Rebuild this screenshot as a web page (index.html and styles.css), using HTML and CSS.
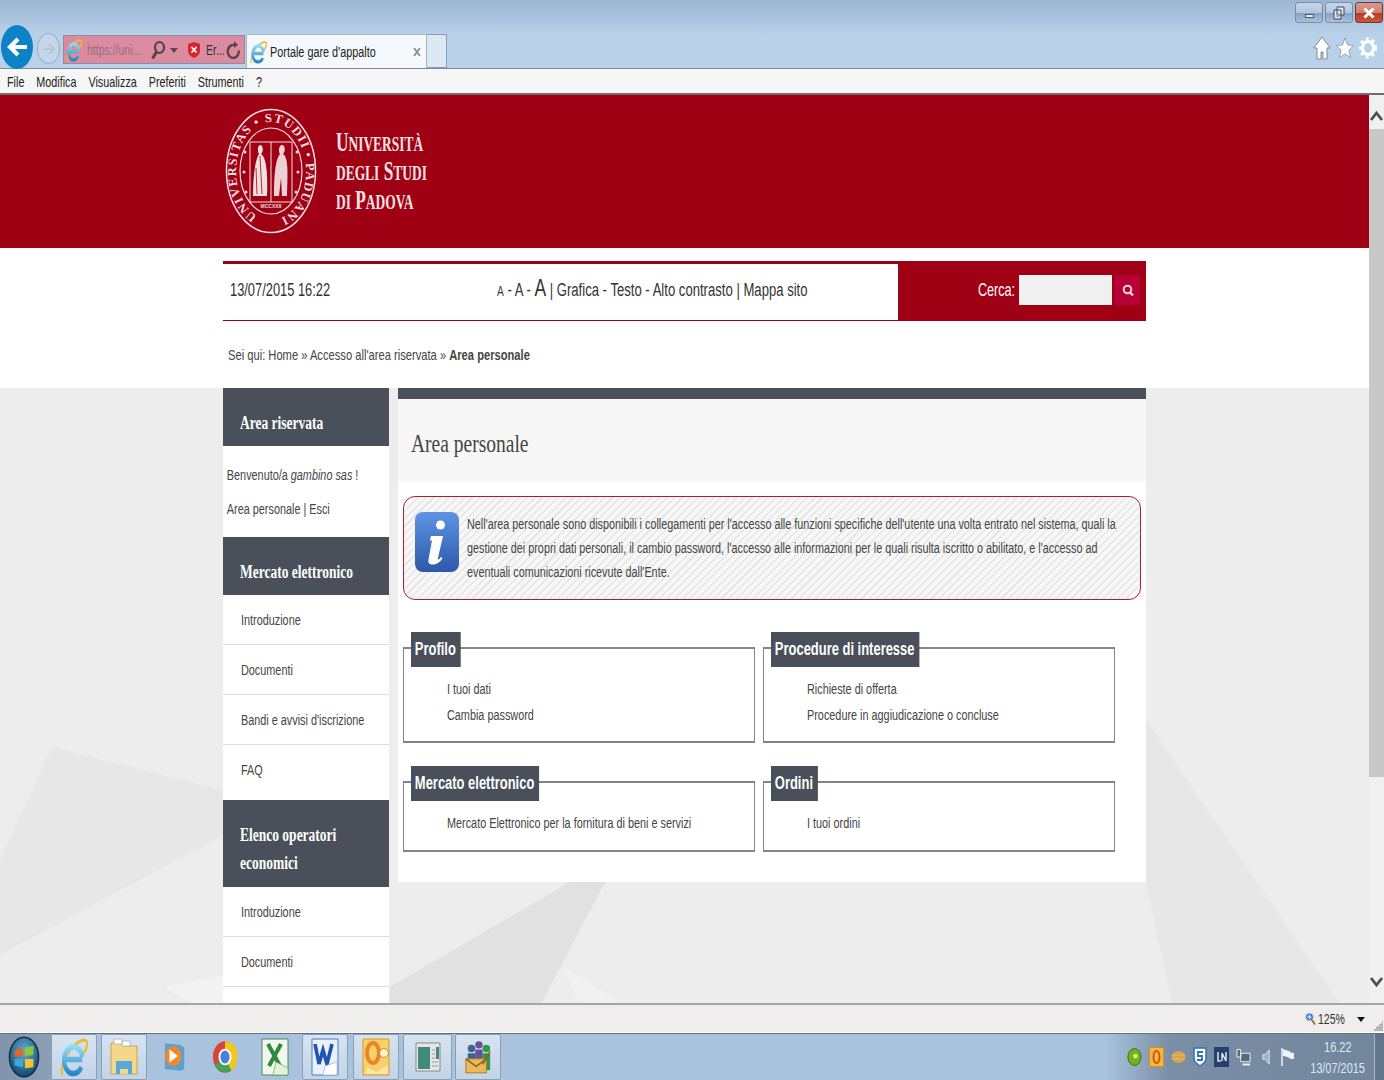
FILE: index.html
```html
<!DOCTYPE html>
<html lang="it">
<head>
<meta charset="utf-8">
<title>Portale gare d'appalto</title>
<link rel="stylesheet" href="styles.css">
</head>
<body>
<svg class="defs" width="0" height="0" aria-hidden="true">
  <defs>
    <linearGradient id="ieb" x1="0" y1="0" x2="0" y2="1"><stop offset="0" stop-color="#8fdcf5"/><stop offset="1" stop-color="#2a86c8"/></linearGradient>
    <symbol id="ie" viewBox="0 0 24 24" preserveAspectRatio="none">
      <path d="M2 23C0 19 5 9 14 4c4-2 8-3 9-1 1 2-1 5-3 7" fill="none" stroke="#f2b92c" stroke-width="1.800"/>
      <path d="M5 13.500h14M18.300 18a8 8 0 1 1 .9-6" fill="none" stroke="url(#ieb)" stroke-width="3.400"/>
    </symbol>
  </defs>
</svg>
<div class="app">
  <header class="chrome">
    <div class="winbtns">
      <span class="wb"><i class="min"></i></span>
      <span class="wb"><svg width="14" height="14" viewBox="0 0 14 14"><path d="M5 1h7v8H5zM2 4h7v9H2z" fill="#dfe6ee" stroke="#3f4a58"/><path d="M4.500 7h2.500v4H4.500z" fill="#8fa2b6"/></svg></span>
      <span class="wb close"><svg width="14" height="12" viewBox="0 0 14 12"><path d="M2.500 1.500l9 9M11.500 1.500l-9 9" stroke="#fff" stroke-width="3"/></svg></span>
    </div>
    <div class="navrow">
      <span class="back"><svg width="24" height="24" viewBox="0 0 24 24"><path d="M22 12H6M13 4l-8 8 8 8" fill="none" stroke="#fff" stroke-width="4.200"/></svg></span>
      <span class="fwd"><svg width="16" height="18" viewBox="0 0 16 18"><path d="M2 9h11M8 4l5 5-5 5" fill="none" stroke="#b8c6d6" stroke-width="2"/></svg></span>
      <div class="addr">
        <svg class="addr-ie" width="16" height="24"><use href="#ie"/></svg>
        <span class="url">https://uni...</span>
        <svg class="addr-search" width="16" height="20" viewBox="0 0 16 20"><ellipse cx="9.500" cy="7.500" rx="4.500" ry="5.500" fill="none" stroke="#54414a" stroke-width="2.200"/><path d="M6.500 12L2.500 18.500" stroke="#54414a" stroke-width="3"/></svg>
        <i class="caret"></i>
        <svg class="addr-shield" width="14" height="18" viewBox="0 0 14 18"><path d="M7 1l6 2v7c0 3-3 6-6 7-3-1-6-4-6-7V3z" fill="#d8262c"/><path d="M4.500 6l5 5.500M9.500 6l-5 5.500" stroke="#fff" stroke-width="1.800"/></svg>
        <span class="err">Er...</span>
        <svg class="addr-reload" width="14" height="18" viewBox="0 0 14 18"><path d="M9.500 4.500a5.500 6.500 0 1 0 3.200 5" fill="none" stroke="#55474e" stroke-width="2.400"/><path d="M8 0v7l4-3z" fill="#55474e"/></svg>
      </div>
      <div class="tab">
        <svg class="tab-ie" width="17" height="24"><use href="#ie"/></svg>
        <span class="tabtitle">Portale gare d'appalto</span>
        <svg class="tabx" width="8" height="10" viewBox="0 0 8 10"><path d="M1 1l6 8M7 1l-6 8" stroke="#8d8d8d" stroke-width="1.800"/></svg>
      </div>
      <div class="newtab"></div>
      <div class="tools">
        <svg width="18" height="24" viewBox="0 0 18 24"><path d="M9 1L.8 12H4v11h4v-7h2v7h4V12h3.200z" fill="#fff" stroke="#7d8b9b"/></svg>
        <svg width="18" height="22" viewBox="0 0 18 22"><path d="M9 1l2.500 7 6 .5-4.600 4.800 1.500 7.200L9 16.800 3.600 20.500l1.500-7.200L.5 8.500l6-.5z" fill="#fff" stroke="#7d8b9b" stroke-width=".7"/></svg>
        <svg width="18" height="24" viewBox="0 0 18 24"><ellipse cx="9" cy="12" rx="5.500" ry="6.500" fill="none" stroke="#fff" stroke-width="3.200"/><ellipse cx="9" cy="12" rx="7.800" ry="9.500" fill="none" stroke="#fff" stroke-width="2.400" stroke-dasharray="3 3.400"/></svg>
      </div>
    </div>
    <nav class="menubar">
      <div class="menuin"><span>File</span><span>Modifica</span><span>Visualizza</span><span>Preferiti</span><span>Strumenti</span><span>?</span></div>
    </nav>
  </header>

  <div class="viewport">
    <div class="page">
      <div class="banner">
        <div class="wrap bannerin">
          <svg class="seal" width="92" height="126" viewBox="0 0 92 126">
            <defs><path id="ring" d="M32 107.900A35 49 0 1 1 48 112"/></defs>
            <ellipse cx="46" cy="63" rx="44.500" ry="61.500" fill="none" stroke="#f1dfe0" stroke-width="1.500"/>
            <ellipse cx="46" cy="63" rx="31" ry="43" fill="none" stroke="#f1dfe0" stroke-width="1.200"/>
            <text class="sealtext" fill="#f1dfe0"><textPath href="#ring" textLength="240" lengthAdjust="spacing">UNIVERSITAS • STUDII • PADUANI</textPath></text>
            <path d="M25 34h42v60H25z" fill="none" stroke="#f1dfe0"/>
            <path d="M46 34v60" stroke="#f1dfe0"/>
            <circle cx="20" cy="44" r="1.500" fill="#f1dfe0"/><circle cx="72" cy="44" r="1.500" fill="#f1dfe0"/>
            <circle cx="19" cy="64" r="1.500" fill="#f1dfe0"/><circle cx="73" cy="64" r="1.500" fill="#f1dfe0"/>
            <circle cx="21" cy="84" r="1.500" fill="#f1dfe0"/><circle cx="71" cy="84" r="1.500" fill="#f1dfe0"/>
            <path d="M35 37c3 0 4 6 1 9 5 3 7 17 6 42H28c0-18 2-36 6-42-2-3-1-9 1-9z" fill="#f1dfe0"/>
            <path d="M35 48l2 38M31 60l1 26" stroke="#a00013" stroke-width=".8"/>
            <path d="M57 37c3 0 4 6 1 9 5 3 5 16 4 42h-5l-1-18-2 18h-5c0-18 1-36 6-42-2-3-1-9 2-9z" fill="#ecd0d3"/>
            <text class="sealyear" x="46" y="100" text-anchor="middle" fill="#f1dfe0">MCCXXII</text>
          </svg>
          <div class="logotext">
            <div>U<small>NIVERSITÀ</small></div>
            <div><small>DEGLI</small> S<small>TUDI</small></div>
            <div><small>DI</small> P<small>ADOVA</small></div>
          </div>
        </div>
      </div>

      <div class="wrap">
        <div class="infobar">
          <div class="infoleft">
            <span class="date">13/07/2015 16:22</span>
            <span class="access"><span class="a1">A</span> - <span class="a2">A</span> - <span class="a3">A</span> | Grafica - Testo - Alto contrasto | Mappa sito</span>
          </div>
          <div class="search">
            <span class="cerca">Cerca:</span>
            <span class="sinput"></span>
            <span class="sbtn"><svg width="12" height="13" viewBox="0 0 12 13"><circle cx="5.500" cy="5.500" r="3.800" fill="none" stroke="#f3d4dc" stroke-width="2"/><path d="M8 8.500l3 3" stroke="#f3d4dc" stroke-width="2.400"/></svg></span>
          </div>
        </div>
        <div class="crumbs">Sei qui: Home » Accesso all'area riservata » <b>Area personale</b></div>
      </div>

      <div class="body">
        <svg class="bgshapes" width="1369" height="620" viewBox="0 0 1369 620">
          <path d="M52 359L223 402V447L0 567V472z" fill="#e7e7e7"/>
          <path d="M163 599L223 587V616H193z" fill="#f2f2f2"/>
          <path d="M1146 332L1340 616H1172L1146 494z" fill="#e7e7e7"/>
          <path d="M570 494H605L541 616H390V599z" fill="#e1e1e1"/>
          <path d="M563 577L622 616H579z" fill="#f1f1f1"/>
        </svg>
        <div class="wrap cols">
          <aside class="side">
            <h3 class="shead"><span class="serif">Area riservata</span></h3>
            <p class="hello first">Benvenuto/a <em>gambino sas</em> !</p>
            <p class="hello second">Area personale | Esci</p>
            <h3 class="shead"><span class="serif">Mercato elettronico</span></h3>
            <div class="sitem"><a>Introduzione</a></div>
            <div class="sitem"><a>Documenti</a></div>
            <div class="sitem"><a>Bandi e avvisi d'iscrizione</a></div>
            <div class="sitem last"><a>FAQ</a></div>
            <h3 class="shead tall"><span class="serif">Elenco operatori<br>economici</span></h3>
            <div class="sitem"><a>Introduzione</a></div>
            <div class="sitem"><a>Documenti</a></div>
            <div class="sitem"></div>
          </aside>
          <main class="main">
            <div class="title"><h1 class="serif">Area personale</h1></div>
            <div class="notice">
              <svg class="infoicon" width="44" height="60" viewBox="0 0 44 60">
                <defs><linearGradient id="ib" x1="0" y1="0" x2="0" y2="1"><stop offset="0" stop-color="#5f94e4"/><stop offset="1" stop-color="#2c58a8"/></linearGradient></defs>
                <rect width="44" height="60" rx="8" fill="url(#ib)"/>
                <circle cx="25.500" cy="13" r="4.500" fill="#fff"/>
                <path d="M16 24h12l-5 22c-.5 2 1 2 3-1l1.500 1C25 51 20 53 16.500 52.500c-3-.5-3.500-3-3-5l3.500-19h-2z" fill="#fff"/>
              </svg>
              <p>Nell'area personale sono disponibili i collegamenti per l'accesso alle funzioni specifiche dell'utente una volta entrato nel sistema, quali la<br>gestione dei propri dati personali, il cambio password, l'accesso alle informazioni per le quali risulta iscritto o abilitato, e l'accesso ad<br>eventuali comunicazioni ricevute dall'Ente.</p>
            </div>
            <div class="boxes">
              <section class="box tall"><h4>Profilo</h4><a>I tuoi dati</a><a>Cambia password</a></section>
              <section class="box tall"><h4>Procedure di interesse</h4><a>Richieste di offerta</a><a>Procedure in aggiudicazione o concluse</a></section>
              <section class="box short"><h4>Mercato elettronico</h4><a>Mercato Elettronico per la fornitura di beni e servizi</a></section>
              <section class="box short"><h4>Ordini</h4><a>I tuoi ordini</a></section>
            </div>
          </main>
        </div>
      </div>
    </div>
    <div class="scrollbar">
      <svg class="up" width="15" height="16" viewBox="0 0 15 16"><path d="M2 12l5.500-7 5.500 7" fill="none" stroke="#4f4f4f" stroke-width="2.800"/></svg>
      <div class="thumb"></div>
      <svg class="down" width="15" height="16" viewBox="0 0 15 16"><path d="M2 4l5.500 7 5.500-7" fill="none" stroke="#4f4f4f" stroke-width="2.800"/></svg>
    </div>
  </div>

  <div class="status">
    <svg class="zoomicon" width="11" height="14" viewBox="0 0 11 14"><circle cx="4.500" cy="5" r="4" fill="#3f7fd0" stroke="#c9d6e6"/><path d="M2.500 5h4M4.500 3v4" stroke="#fff"/><path d="M7 8l3 4.500" stroke="#a0703c" stroke-width="2"/></svg>
    <span class="zoom">125%</span>
    <i class="dcaret"></i>
    <span class="grip"></span>
  </div>

  <footer class="taskbar">
    <span class="start"><svg width="32" height="44" viewBox="0 0 34 44"><defs><radialGradient id="orb" cx=".5" cy=".35" r=".7"><stop offset="0" stop-color="#5fb0d8"/><stop offset="1" stop-color="#0e3f66"/></radialGradient></defs><ellipse cx="17" cy="22" rx="15.500" ry="21" fill="url(#orb)" stroke="#0f2f4a" stroke-width="1.500"/><path d="M7 15l9-3v9l-9 1z" fill="#e8622c"/><path d="M18 12l9-2 0 10-9 1z" fill="#8cc63f"/><path d="M7 24h9v9l-9-2z" fill="#3ea6e0"/><path d="M18 24h9l0 9-9 1z" fill="#f4c430"/></svg></span>
    <span class="tb on"><svg width="28" height="40"><use href="#ie"/></svg></span>
    <span class="tb on"><svg width="28" height="38" viewBox="0 0 28 38"><path d="M1 5h10l2 3h14v28H1z" fill="#f3d88a" stroke="#c9a34f"/><path d="M4 1h8v5H4zM12 3h8v5h-8z" fill="#fff" stroke="#bbb"/><path d="M6 23h16v13H6z" fill="#5aa8d8"/><path d="M10 31h8v5h-8z" fill="#f3d88a"/></svg></span>
    <span class="tb"><svg width="24" height="36" viewBox="0 0 26 36"><path d="M2 3l17 2 4 3v23l-4 2-17-2z" fill="#5b9fd4"/><ellipse cx="11" cy="17" rx="9" ry="11" fill="#ef8a2c"/><path d="M7 10l9 7-9 7z" fill="#fff"/></svg></span>
    <span class="tb"><svg width="26" height="36" viewBox="0 0 28 36"><ellipse cx="14" cy="18" rx="13" ry="17" fill="#d9453a"/><path d="M14 18L3 27C8 36 19 37 24 28z" fill="#3aa757"/><path d="M14 1c6 0 11 4 13 10v10c-1 6-3 9-6 12l-7-15z" fill="#f5c518"/><ellipse cx="14" cy="18" rx="7" ry="9" fill="#fff"/><ellipse cx="14" cy="18" rx="5" ry="7" fill="#4a80d8"/></svg></span>
    <span class="tb"><svg width="28" height="38" viewBox="0 0 28 38"><path d="M1 1h26v36H1z" fill="#f1f7ee" stroke="#4b8b54"/><path d="M7 6l12 22M20 6L8 28" fill="none" stroke="#2f8a3c" stroke-width="4"/><path d="M15 24l12 6v7H12z" fill="#e4f1dc" stroke="#6aa86f" stroke-width=".7"/></svg></span>
    <span class="tb on"><svg width="28" height="38" viewBox="0 0 28 38"><path d="M1 1h26v36H1z" fill="#eaf1fb" stroke="#4a7cc4"/><path d="M4 6l4 20 4-14 4 14 5-20" fill="none" stroke="#1f55ad" stroke-width="3.600"/><path d="M14 28l12-4v13H12z" fill="#fff" stroke="#9bb4d8" stroke-width=".7"/></svg></span>
    <span class="tb on"><svg width="28" height="38" viewBox="0 0 28 38"><path d="M1 1h26v36H1z" fill="#f8d06a" stroke="#d99a2c"/><ellipse cx="11" cy="15" rx="6" ry="10" fill="none" stroke="#e8852c" stroke-width="4"/><circle cx="22" cy="15" r="4.500" fill="#fff3cf" stroke="#c98a2c"/><path d="M5 29l9 5 12-7v9H3z" fill="#fbe6a8"/></svg></span>
    <span class="tb on wide"><svg width="26" height="30" viewBox="0 0 26 30"><path d="M1 1h24v28H1z" fill="#e6e6e6" stroke="#888"/><path d="M3 5h12v22H3z" fill="#3f8a7a"/><path d="M21 5h3v12h-3z" fill="#3f8a7a"/><path d="M17 8h3M17 12h3M17 16h3M17 20h6M17 24h6" stroke="#999"/></svg></span>
    <span class="tb on"><svg width="28" height="36" viewBox="0 0 30 36"><circle cx="8" cy="9" r="4" fill="#40608f"/><circle cx="16" cy="5" r="4" fill="#6a4f9f"/><circle cx="24" cy="9" r="4" fill="#2c9a4a"/><path d="M4 14h8v14H4z" fill="#40608f"/><path d="M12 10h8v14h-8z" fill="#6a4f9f"/><path d="M20 14h8v18h-8z" fill="#2c9a4a"/><path d="M2 20h22v15H2z" fill="#eab95a" stroke="#a97a24"/><path d="M2 20l11 8 11-8M20 26l8-14" fill="none" stroke="#8a5f14" stroke-width="1.500"/></svg></span>
    <div class="tray">
      <svg width="15" height="20" viewBox="0 0 16 20"><ellipse cx="8" cy="10" rx="7" ry="9" fill="#6fb61e" stroke="#3a6a12"/><circle cx="9" cy="9" r="2.500" fill="#d6f08a"/></svg>
      <svg width="15" height="20" viewBox="0 0 15 20"><rect x=".5" y=".5" width="14" height="19" fill="#f4b83a" stroke="#d98f1a"/><ellipse cx="7.500" cy="10" rx="3" ry="6" fill="none" stroke="#c9561c" stroke-width="2"/></svg>
      <svg width="15" height="14" viewBox="0 0 15 14"><ellipse cx="7.500" cy="7" rx="7" ry="6" fill="#d9a05a"/><path d="M1 5h13M1 9h13" stroke="#e9c24a"/></svg>
      <svg width="14" height="20" viewBox="0 0 14 20"><path d="M1 1h12v11c0 3-3 5-6 7-3-2-6-4-6-7z" fill="#fff" stroke="#2f6fb5" stroke-width="1.500"/><path d="M10 5H5v4h4v4H4" fill="none" stroke="#2f6fb5" stroke-width="1.800"/></svg>
      <svg width="15" height="20" viewBox="0 0 15 20"><rect width="15" height="20" fill="#24406e"/><path d="M4 5v9h3M8 14V6l4 8V5" fill="none" stroke="#dfe6f0" stroke-width="1.500"/></svg>
      <svg width="15" height="20" viewBox="0 0 16 20"><path d="M1 2h4v8H1zM5 6h10v9H5z" fill="#5b6b78" stroke="#eef3f8"/><path d="M7 18h8" stroke="#eef3f8" stroke-width="2"/></svg>
      <svg class="speaker" width="8" height="20" viewBox="0 0 10 20"><path d="M1 7h3l5-6v18l-5-6H1z" fill="#9fb0c0" stroke="#eef3f8"/></svg>
      <svg class="flag" width="15" height="20" viewBox="0 0 15 20"><path d="M2 1v18" stroke="#eef3f8" stroke-width="1.500"/><path d="M3 2c4 2 5 1 6 2s3 2 5 2v6c-2 0-4 0-5-1S6 9 3 9z" fill="#eef3f8"/></svg>
      <div class="clock"><span>16.22</span><span>13/07/2015</span></div>
      <span class="showdesk"></span>
    </div>
  </footer>
</div>
</body>
</html>
```

FILE: styles.css
```css
* { box-sizing: border-box; }
html, body { margin: 0; padding: 0; height: 100%; overflow: hidden; }
body { font-family: "Liberation Sans", Arial, sans-serif; color: #333; font-size: 15.5px; }
.defs { position: absolute; }
.app { width: 1384px; height: 1080px; display: flex; flex-direction: column; overflow: hidden; }

/* The screenshot is squeezed horizontally: all text is scaled on the x axis */
.url, .err, .tabtitle, .menuin, .date, .access, .cerca, .crumbs, .hello, .sitem a,
.notice p, .box a, .box h4, .zoom, .clock span {
  transform: scaleX(.7); transform-origin: left center; white-space: nowrap;
}

/* Browser chrome */
.chrome { height: 95px; flex: none; background: linear-gradient(#9bb6d3 0, #b9d0e9 34px, #bad1ea 68px); display: flex; flex-direction: column; position: relative; }
.winbtns { position: absolute; top: 2px; right: 1px; display: flex; gap: 2px; }
.wb { width: 28px; height: 21px; border: 1px solid #7c8ea3; border-radius: 3px; background: linear-gradient(#c4d6ea 0, #b1c7df 50%, #83a0bf 51%, #a9c2dc); display: flex; align-items: center; justify-content: center; }
.wb.close { background: linear-gradient(#d99a8c 0, #cf7f6e 50%, #b83a22 51%, #c9553e); border-color: #6e3b3b; }
.min { display: block; width: 9px; height: 4px; background: #e8edf3; border: 1px solid #4a5868; margin-top: 6px; }
.navrow { height: 68px; display: flex; align-items: flex-end; position: relative; }
.back { width: 32px; height: 44px; margin: 0 0 -1px 1px; border-radius: 50%; background: #0c83c7; display: flex; align-items: center; justify-content: center; flex: none; }
.fwd { width: 23px; height: 31px; margin: 0 0 4px 4px; border-radius: 50%; border: 1px solid #9db1c7; background: #c3d6ea; display: flex; align-items: center; justify-content: center; flex: none; }
.addr { width: 182px; height: 29px; margin: 0 0 4px 3px; background: #dc8aa0; border: 1px solid #8e8da0; display: flex; align-items: center; font-size: 15px; flex: none; }
.addr svg, .addr .url, .addr .err { flex: none; }
.addr-ie { margin-left: 2px; }
.url { width: 60px; margin-left: 5px; color: #936f80; }
.addr-search { margin-left: 3px; }
.caret { width: 0; height: 0; flex: none; border: 4px solid transparent; border-top: 5px solid #5b4750; margin: 5px 0 0 4px; }
.addr-shield { margin-left: 9px; }
.err { width: 18px; margin-left: 5px; color: #333; }
.addr-reload { margin-left: 2px; }
.tab { width: 181px; height: 34px; margin-left: 1px; background: #f5f9fd; border: 1px solid #a6b4c4; border-bottom: 0; border-radius: 2px 0 0 0; display: flex; align-items: center; padding-left: 3px; font-size: 15.5px; color: #222; flex: none; }
.tab-ie { flex: none; }
.tabtitle { width: 143px; margin-left: 3px; flex: none; }
.tabx { flex: none; }
.newtab { width: 20px; height: 34px; background: #dce8f6; border: 1px solid #8a9bb0; border-left: 0; flex: none; }
.tools { margin: 0 7px 6px auto; display: flex; align-items: center; gap: 5px; height: 28px; }
.menubar { height: 27px; background: #f6f6f6; border-top: 1px solid #7f8b9a; border-bottom: 2px solid #6f6f6f; display: flex; align-items: center; padding-left: 7px; font-size: 15px; color: #222; }
.menuin { display: flex; gap: 16.5px; transform: scaleX(.72); }

/* Scrolling page */
.viewport { height: 910px; flex: none; display: flex; overflow: hidden; border-bottom: 2px solid #a5a5a5; }
.page { width: 1369px; flex: none; background: #fff; overflow: hidden; display: flex; flex-direction: column; }
.scrollbar { width: 15px; flex: none; background: #f0f0f0; display: flex; flex-direction: column; align-items: center; }
.scrollbar svg { flex: none; }
.up { margin: 13px 0 5px; }
.thumb { width: 15px; height: 648px; background: #c8c8c8; flex: none; }
.scrollbar .down { margin-top: auto; margin-bottom: 13px; }
.wrap { width: 923px; margin-left: 223px; }
.banner { height: 153px; flex: none; background: #a00013; }
.bannerin { display: flex; align-items: center; height: 153px; padding-left: 2px; }
.seal { flex: none; margin-top: -2px; }
.sealtext { font: 700 12.5px "Liberation Serif", serif; }
.sealyear { font: 700 5px "Liberation Sans", sans-serif; }
.logotext { margin-left: 19px; font-family: "Liberation Serif", serif; font-weight: 700; color: #f2e3e4; font-size: 27px; line-height: 29px; }
.logotext small { font-size: 21px; line-height: 0; }
.logotext div { transform: scaleX(.64); transform-origin: left; white-space: nowrap; }

.infobar { margin-top: 13px; height: 60px; border-top: 3px solid #a00013; border-bottom: 1px solid #a00013; display: flex; width: 923px; }
.infoleft { width: 675px; flex: none; display: flex; align-items: center; padding: 0 0 4px 7px; font-size: 18px; color: #333; }
.date { width: 267px; flex: none; transform: scaleX(.714); }
.access { flex: none; margin-top: -4px; transform: scaleX(.728); }
.a1 { font-size: 14px; }
.a2 { font-size: 18px; }
.a3 { font-size: 24px; }
.search { width: 248px; flex: none; background: #a00013; margin-top: -3px; margin-bottom: -1px; display: flex; align-items: center; color: #fff; font-size: 18px; padding: 0 0 2px 80px; }
.cerca { width: 41px; flex: none; }
.sinput { width: 93px; height: 30px; background: #f0f0f0; flex: none; }
.sbtn { width: 25px; height: 30px; background: #b60037; margin-left: 3px; display: flex; align-items: center; justify-content: center; flex: none; }
.crumbs { height: 67px; padding: 25px 0 0 6.500px; font-size: 14.5px; line-height: 18px; color: #444; transform: scaleX(.77); }

.body { flex: 1; background: #ededed; position: relative; overflow: hidden; }
.bgshapes { position: absolute; left: 0; top: 0; }
.cols { display: flex; gap: 9px; position: relative; }
.side { width: 166px; flex: none; background: #fff; }
.serif { font-family: "Liberation Serif", serif; display: inline-block; transform: scaleX(.75); transform-origin: left; white-space: nowrap; }
.shead { margin: 0; background: #49505a; color: #fff; height: 58px; padding: 11px 0 0 17px; display: flex; align-items: center; font-size: 18px; font-weight: 700; line-height: 28px; }
.shead.tall { height: 87px; }
.hello { margin: 0; padding-left: 5.500px; color: #444; line-height: 18px; }
.hello.first { height: 46px; padding-top: 20px; }
.hello.second { height: 45px; padding-top: 8px; }
.sitem { height: 50px; border-bottom: 1px solid #ddd; padding: 16px 0 0 17.500px; line-height: 18px; color: #444; }
.sitem.last { height: 55px; border-bottom: 0; }
.sitem a { display: block; }

.main { width: 748px; height: 494px; background: #fff; border-top: 11px solid #49505a; flex: none; }
.title { height: 83px; background: #f7f7f7; padding: 26px 0 0 13px; }
.title h1 { margin: 0; font-size: 26px; font-weight: 400; line-height: 38px; color: #444; }
.notice { margin: 14px 5px 0 5px; height: 104px; border: 1px solid #b01c35; border-radius: 12px; background: repeating-linear-gradient(135deg, #f7f7f7 0 4px, #e6e6e6 4px 5.500px); display: flex; align-items: flex-start; padding: 15px 0 0 11px; }
.infoicon { flex: none; }
.notice p { margin: 0 0 0 8px; line-height: 24px; color: #444; transform: scaleX(.697); }
.boxes { display: grid; grid-template-columns: 352px 352px; column-gap: 8px; row-gap: 38px; padding: 47px 0 0 5px; }
.box { border: 1px solid #80858c; border-width: 2px 1px; position: relative; padding: 27px 0 0 43px; }
.box.tall { height: 96px; }
.box.short { height: 71px; }
.box h4 { position: absolute; left: 7px; top: -17px; margin: 0; height: 35px; background: #49505a; color: #fff; font-size: 18.5px; line-height: 33px; padding: 0 7px 0 5.500px; font-weight: 700; }
.box a { display: block; line-height: 26px; color: #444; }

/* Status and taskbar */
.status { height: 28px; flex: none; background: #f0eeed; display: flex; align-items: center; padding-left: 1305px; font-size: 15px; color: #333; border-bottom: 1px solid #fff; position: relative; }
.zoomicon { flex: none; }
.zoom { width: 39px; margin-left: 2px; flex: none; }
.dcaret { width: 0; height: 0; flex: none; border: 4px solid transparent; border-top: 5px solid #111; margin: 5px 0 0 0; }
.grip { position: absolute; right: 1px; bottom: 1px; width: 10px; height: 10px; background: linear-gradient(135deg, transparent 50%, #b5b5b5 50%); }
.taskbar { height: 47px; flex: none; background: linear-gradient(90deg, #a9c3de 0, #a9c3de 1105px, #7a8ea6 1170px, #71859b 100%); border-top: 1px solid #5d6f83; display: flex; align-items: stretch; }
.start { width: 51px; display: flex; align-items: center; justify-content: center; background: linear-gradient(90deg, #7f93aa, #8ba0b8); flex: none; padding-right: 3px; }
.tb { width: 46px; margin-right: 4.300px; display: flex; align-items: center; justify-content: center; flex: none; }
.tb.on { background: linear-gradient(#d7e3f0, #c2d4e8); border: 1px solid #8c9fb3; border-radius: 2px; }
.tb.wide { width: 49px; margin-right: 3px; }
.tray { margin-left: auto; display: flex; align-items: center; gap: 7px; color: #dfe8f2; }
.tray svg { flex: none; }
.speaker { margin-left: 4px; }
.flag { margin-left: 3px; }
.clock { display: flex; flex-direction: column; align-items: center; width: 72px; font-size: 15px; line-height: 21px; }
.clock span { transform: scaleX(.73); transform-origin: center; }
.showdesk { width: 10px; height: 46px; margin-left: -7px; background: #62758a; border-left: 1px solid #a9b8c8; flex: none; }
```
